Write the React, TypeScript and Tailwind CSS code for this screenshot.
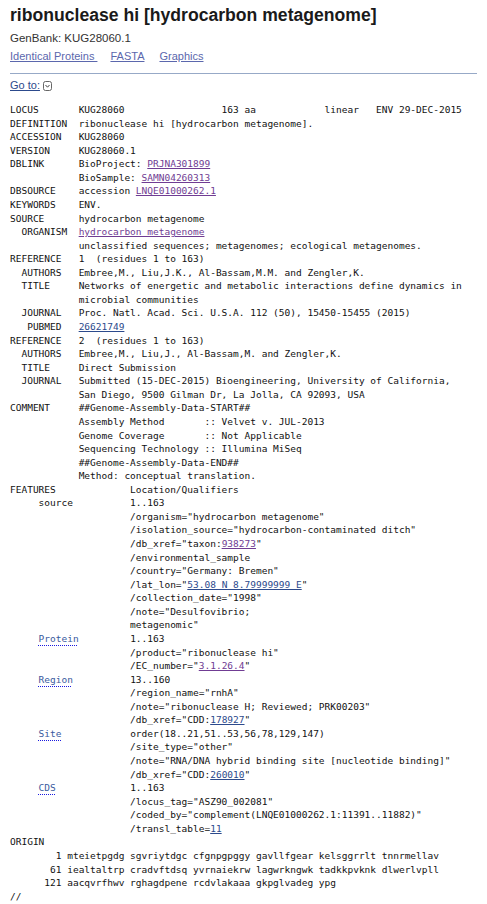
const visited = "text-[#703c93] underline"
const fresh = "text-[#2c4a8c] underline"

function V({ children }: { children: React.ReactNode }) {
  return <a href="#" className={visited}>{children}</a>
}

function N({ children }: { children: React.ReactNode }) {
  return <a href="#" className={fresh}>{children}</a>
}

function Key({ children }: { children: React.ReactNode }) {
  return (
    <span className="text-[#3a5a9e] underline decoration-dotted decoration-[#1a1ae0] underline-offset-[3px]">
      {children}
    </span>
  )
}

export default function App() {
  return (
    <div className="min-h-screen bg-white px-[10px] pt-[4px] text-[#222]" style={{ fontFamily: "Arial, 'Liberation Sans', sans-serif" }}>
      <h1 className="text-[17.6px] leading-[22px] font-bold text-[#1a1a1a]">ribonuclease hi [hydrocarbon metagenome]</h1>
      <div className="mt-[4px] text-[11.5px] leading-[16px] text-[#333]">GenBank: KUG28060.1</div>
      <div className="mt-[3px] flex gap-[13px] text-[11px] leading-[14px]">
        <a href="#" className="text-[#5b67ad] underline">Identical Proteins&nbsp;</a>
        <a href="#" className="text-[#5b67ad] underline">FASTA</a>
        <a href="#" className="ml-[2px] text-[#5b67ad] underline">Graphics</a>
      </div>
      <div className="mt-[10px] border-t border-[#97a9c7]" />
      <div className="mt-[5px] flex items-center gap-[2px] text-[11px] leading-[13px]">
        <a href="#" className="text-[#2c4a8c] underline">Go to:</a>
        <svg width="10" height="10" viewBox="0 0 10 10" className="ml-[1px]">
          <rect x="0.5" y="0.5" width="8" height="9" rx="2" fill="none" stroke="#555" strokeWidth="0.9" />
          <path d="M2.5 4 L4.5 6.2 L6.5 4" fill="none" stroke="#444" strokeWidth="1" />
        </svg>
      </div>
      <pre
        className="mt-[11px] text-[9.5px] leading-[13.56px] text-[#111]"
        style={{ fontFamily: "'DejaVu Sans Mono', 'Liberation Mono', monospace" }}
      >
{`LOCUS       KUG28060                 163 aa            linear   ENV 29-DEC-2015
DEFINITION  ribonuclease hi [hydrocarbon metagenome].
ACCESSION   KUG28060
VERSION     KUG28060.1
DBLINK      BioProject: `}<V>PRJNA301899</V>{`
            BioSample: `}<V>SAMN04260313</V>{`
DBSOURCE    accession `}<V>LNQE01000262.1</V>{`
KEYWORDS    ENV.
SOURCE      hydrocarbon metagenome
  ORGANISM  `}<V>hydrocarbon metagenome</V>{`
            unclassified sequences; metagenomes; ecological metagenomes.
REFERENCE   1  (residues 1 to 163)
  AUTHORS   Embree,M., Liu,J.K., Al-Bassam,M.M. and Zengler,K.
  TITLE     Networks of energetic and metabolic interactions define dynamics in
            microbial communities
  JOURNAL   Proc. Natl. Acad. Sci. U.S.A. 112 (50), 15450-15455 (2015)
   PUBMED   `}<N>26621749</N>{`
REFERENCE   2  (residues 1 to 163)
  AUTHORS   Embree,M., Liu,J., Al-Bassam,M. and Zengler,K.
  TITLE     Direct Submission
  JOURNAL   Submitted (15-DEC-2015) Bioengineering, University of California,
            San Diego, 9500 Gilman Dr, La Jolla, CA 92093, USA
COMMENT     ##Genome-Assembly-Data-START##
            Assembly Method       :: Velvet v. JUL-2013
            Genome Coverage       :: Not Applicable
            Sequencing Technology :: Illumina MiSeq
            ##Genome-Assembly-Data-END##
            Method: conceptual translation.
FEATURES             Location/Qualifiers
     source          1..163
                     /organism="hydrocarbon metagenome"
                     /isolation_source="hydrocarbon-contaminated ditch"
                     /db_xref="taxon:`}<V>938273</V>{`"
                     /environmental_sample
                     /country="Germany: Bremen"
                     /lat_lon="`}<N>53.08 N 8.79999999 E</N>{`"
                     /collection_date="1998"
                     /note="Desulfovibrio;
                     metagenomic"
     `}<Key>Protein</Key>{`         1..163
                     /product="ribonuclease hi"
                     /EC_number="`}<V>3.1.26.4</V>{`"
     `}<Key>Region</Key>{`          13..160
                     /region_name="rnhA"
                     /note="ribonuclease H; Reviewed; PRK00203"
                     /db_xref="CDD:`}<N>178927</N>{`"
     `}<Key>Site</Key>{`            order(18..21,51..53,56,78,129,147)
                     /site_type="other"
                     /note="RNA/DNA hybrid binding site [nucleotide binding]"
                     /db_xref="CDD:`}<N>260010</N>{`"
     `}<Key>CDS</Key>{`             1..163
                     /locus_tag="ASZ90_002081"
                     /coded_by="complement(LNQE01000262.1:11391..11882)"
                     /transl_table=`}<N>11</N>{`
ORIGIN
        1 mteietpgdg sgvriytdgc cfgnpgpggy gavllfgear kelsggrrlt tnnrmellav
       61 iealtaltrp cradvftdsq yvrnaiekrw lagwrkngwk tadkkpvknk dlwerlvpll
      121 aacqvrfhwv rghagdpene rcdvlakaaa gkpglvadeg ypg
//`}
      </pre>
    </div>
  )
}
